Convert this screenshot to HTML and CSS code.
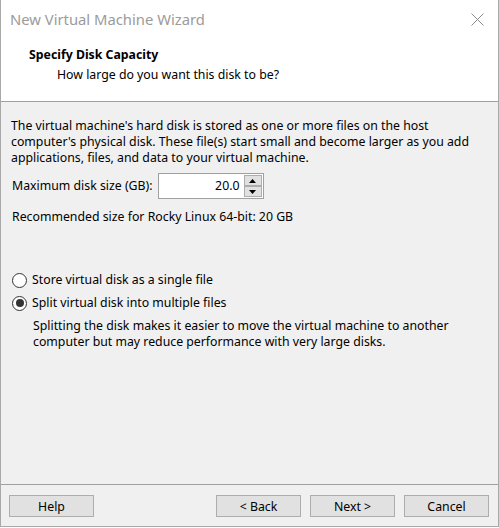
FILE: index.html
```html
<!DOCTYPE html>
<html>
<head>
<meta charset="utf-8">
<link rel="stylesheet" href="styles.css">
</head>
<body>
<div class="window">
  <div class="top">
    <div class="titlebar">
      <span class="title">New Virtual Machine Wizard</span>
      <svg class="close" width="13" height="13" viewBox="0 0 13 13"><path d="M0.5 0.5L12.5 12.5M12.5 0.5L0.5 12.5" stroke="#8a8a8a" stroke-width="1" fill="none"/></svg>
    </div>
    <div class="header">
      <div class="h-title">Specify Disk Capacity</div>
      <div class="h-sub">How large do you want this disk to be?</div>
    </div>
  </div>
  <div class="body">
    <p class="intro">The virtual machine's hard disk is stored as one or more files on the host<br>computer's physical disk. These file(s) start small and become larger as you add<br>applications, files, and data to your virtual machine.</p>
    <div class="size-row">
      <span class="label">Maximum disk size (GB):</span>
      <div class="spin">
        <div class="spin-input">20.0</div>
        <div class="spin-btns">
          <div class="spin-btn"><svg width="7" height="4" viewBox="0 0 7 4"><path d="M3.5 0L7 4H0Z" fill="#000"/></svg></div>
          <div class="spin-btn"><svg width="7" height="4" viewBox="0 0 7 4"><path d="M0 0H7L3.5 4Z" fill="#000"/></svg></div>
        </div>
      </div>
    </div>
    <p class="rec">Recommended size for Rocky Linux 64-bit: 20 GB</p>
    <div class="radios">
      <div class="radio-row"><span class="radio"></span><span>Store virtual disk as a single file</span></div>
      <div class="radio-row"><span class="radio checked"></span><span>Split virtual disk into multiple files</span></div>
      <p class="desc">Splitting the disk makes it easier to move the virtual machine to another<br>computer but may reduce performance with very large disks.</p>
    </div>
  </div>
  <div class="footer">
    <button class="btn">Help</button>
    <div class="nav">
      <button class="btn">&lt; Back</button>
      <button class="btn">Next &gt;</button>
      <button class="btn">Cancel</button>
    </div>
  </div>
</div>
</body>
</html>
```
FILE: styles.css
```css
html, body {
  margin: 0;
  padding: 0;
  background: #ffffff;
}
body {
  font-family: "Noto Sans", "Liberation Sans", Arial, sans-serif;
  font-size: 12.3px;
  color: #000;
}
.window {
  box-sizing: border-box;
  width: 499px;
  height: 527px;
  border-left: 1px solid #a9a9a9;
  border-right: 1px solid #a9a9a9;
  border-bottom: 1px solid #a9a9a9;
  background: #f0f0f0;
  display: flex;
  flex-direction: column;
}
.top {
  background: #ffffff;
  height: 102px;
  box-sizing: border-box;
  border-bottom: 1px solid #a0a0a0;
  flex: none;
}
.titlebar {
  height: 38px;
  display: flex;
  align-items: flex-start;
  justify-content: space-between;
  padding: 9px 14px 0 9px;
  box-sizing: border-box;
}
.title {
  font-size: 14.8px;
  line-height: 20px;
  color: #9b9b9b;
}
.close {
  margin-top: 4px;
}
.header {
  padding: 9px 0 0 28px;
}
.h-title {
  font-weight: bold;
  line-height: 16px;
}
.h-sub {
  line-height: 16px;
  margin-top: 4px;
  padding-left: 28px;
}
.body {
  flex: 1;
  padding: 16px 10px 0 10px;
  line-height: 16px;
  border-bottom: 1px solid #a0a0a0;
}
.intro {
  margin: 0;
}
.size-row {
  display: flex;
  align-items: center;
  margin-top: 7px;
  padding-left: 1px;
}
.label {
  margin-right: 5px;
}
.spin {
  display: flex;
  height: 26px;
  box-sizing: border-box;
  border: 1px solid #a0a0a0;
  background: #fff;
}
.spin-input {
  width: 81px;
  text-align: right;
  line-height: 24px;
  padding-right: 3px;
}
.spin-btns {
  display: flex;
  flex-direction: column;
  padding: 1px;
  background: #fff;
}
.spin-btn {
  width: 18px;
  flex: 1;
  box-sizing: border-box;
  border: 1px solid #adadad;
  background: #e1e1e1;
  display: flex;
  align-items: center;
  justify-content: center;
}
.rec {
  margin: 10px 0 0 1px;
}
.radios {
  margin-top: 47px;
}
.radio-row {
  display: flex;
  align-items: center;
  gap: 5px;
  height: 16px;
  margin-bottom: 7px;
  padding-left: 1px;
}
.radio {
  width: 15px;
  height: 15px;
  box-sizing: border-box;
  border: 1px solid #333;
  border-radius: 50%;
  background: #fff;
  display: flex;
  align-items: center;
  justify-content: center;
}
.radio.checked::after {
  content: "";
  width: 8px;
  height: 8px;
  border-radius: 50%;
  background: #333;
}
.desc {
  margin: 1px 0 0 22px;
}
.footer {
  flex: none;
  height: 41px;
  display: flex;
  justify-content: space-between;
  align-items: flex-start;
  padding: 10px 9px 0 8px;
  box-sizing: border-box;
}
.nav {
  display: flex;
  gap: 9px;
}
.btn {
  width: 85px;
  height: 22px;
  box-sizing: border-box;
  border: 1px solid #adadad;
  background: #e1e1e1;
  font-family: "Noto Sans", "Liberation Sans", Arial, sans-serif;
  font-size: 12.3px;
  color: #000;
  padding: 0;
  margin: 0;
}
```
